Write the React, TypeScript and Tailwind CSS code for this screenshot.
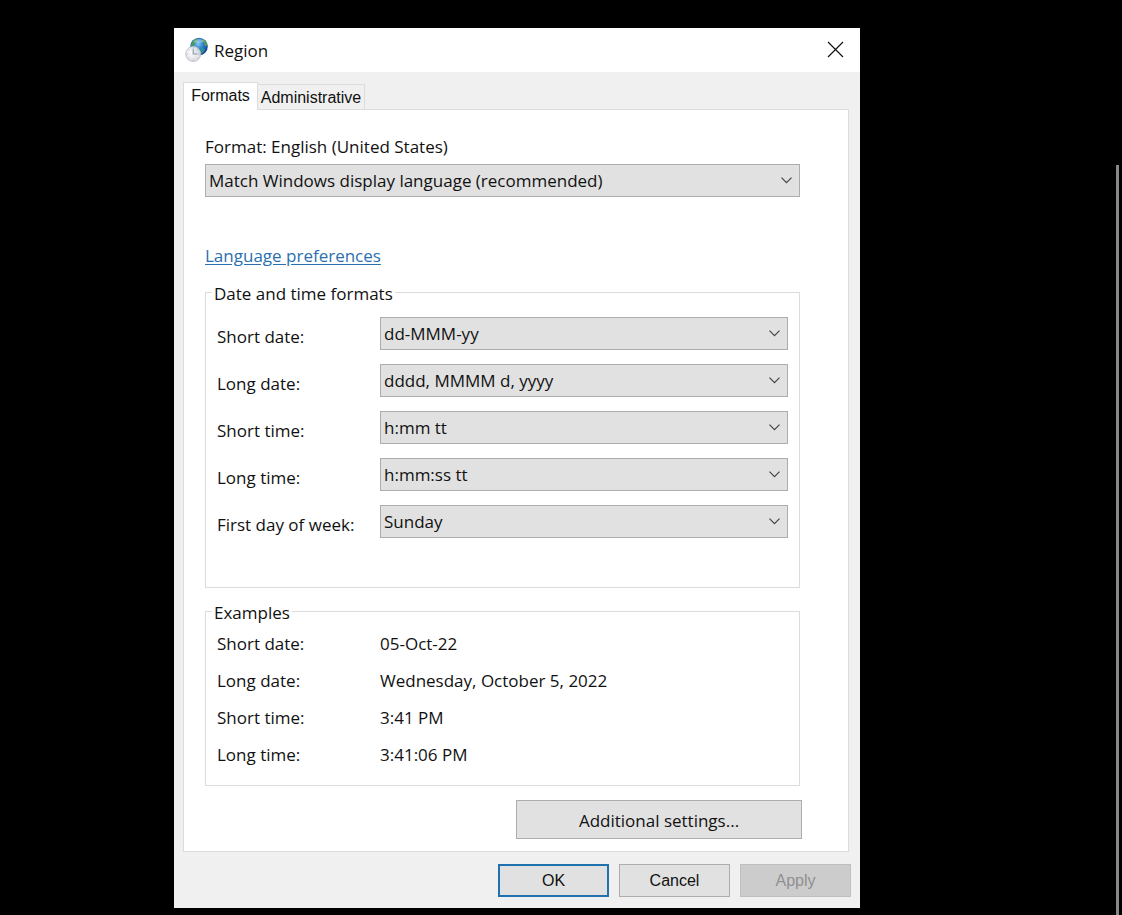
import { useState } from "react"

const dateTimeFormats = [
  { id: "short-date", label: "Short date:", options: ["dd-MMM-yy", "M/d/yyyy", "yyyy-MM-dd"] },
  { id: "long-date", label: "Long date:", options: ["dddd, MMMM d, yyyy", "MMMM d, yyyy"] },
  { id: "short-time", label: "Short time:", options: ["h:mm tt", "HH:mm"] },
  { id: "long-time", label: "Long time:", options: ["h:mm:ss tt", "HH:mm:ss"] },
  { id: "first-day", label: "First day of week:", options: ["Sunday", "Monday", "Saturday"] },
]

const examples = [
  { label: "Short date:", value: "05-Oct-22" },
  { label: "Long date:", value: "Wednesday, October 5, 2022" },
  { label: "Short time:", value: "3:41 PM" },
  { label: "Long time:", value: "3:41:06 PM" },
]

function RegionIcon() {
  return (
    <svg width="24" height="26" viewBox="0 0 24 26" aria-hidden="true">
      <defs>
        <radialGradient id="globe" cx="0.45" cy="0.35" r="0.65">
          <stop offset="0" stopColor="#7cc8f2" />
          <stop offset="0.5" stopColor="#2c78c8" />
          <stop offset="1" stopColor="#123a94" />
        </radialGradient>
        <radialGradient id="clock" cx="0.4" cy="0.4" r="0.65">
          <stop offset="0" stopColor="#ffffff" />
          <stop offset="1" stopColor="#d5d8de" />
        </radialGradient>
      </defs>
      <circle cx="14" cy="9.500" r="8.800" fill="url(#globe)" />
      <path d="M6.500 6c1.400-2.600 3.800-4.300 6.500-4.800l-.6 2.300-2 1.500-.6 2.400-2 1.800-2 .8z" fill="#4e9c4c" opacity="0.85" />
      <path d="M17.500 1.800c2.400 1 4.200 3 4.900 5.600l-1.400 2-1.600-1.200-.4-2.400-2-1.200z" fill="#57a850" opacity="0.85" />
      <path d="M15 10.500l3.400.2 1.600 1.800-1.400 2.800-2.400 1.800-.8-3z" fill="#2f9a88" opacity="0.8" />
      <path d="M8 4.500c3-2.800 8-3.200 11.500-.5-3 2.200-8 2.800-11.500.5z" fill="#ffffff" opacity="0.3" />
      <circle cx="8.200" cy="17" r="7.500" fill="url(#clock)" fillOpacity="0.94" stroke="#bcc0c6" strokeWidth="0.900" />
      <path d="M8.200 12.200V17h4" fill="none" stroke="#9096a0" strokeWidth="1.100" />
      <path
        d="M8.200 10.600v1M8.200 22.400v1M1.800 17h1M13.600 17h1M3.700 12.500l.7.700M12 20.800l.7.700M3.700 21.500l.7-.7M12 13.200l.7-.7"
        stroke="#a3a8b0"
        strokeWidth="0.800"
      />
    </svg>
  )
}

function Dropdown({ id, options }: { id: string; options: string[] }) {
  return (
    <div className="relative w-full">
      <select
        id={id}
        className="block h-[33px] w-full appearance-none border border-[#adadad] bg-[#e1e1e1] pl-[3px] pr-8 pt-px text-[17px] leading-6 text-[#111]"
      >
        {options.map((option) => (
          <option key={option}>{option}</option>
        ))}
      </select>
      <svg
        className="pointer-events-none absolute right-2 top-[13px]"
        width="11"
        height="7"
        viewBox="0 0 11 7"
        fill="none"
        stroke="#444"
        strokeWidth="1.2"
        aria-hidden="true"
      >
        <path d="M0.500 0.700l5 5 5-5" />
      </svg>
    </div>
  )
}

export default function App() {
  const [tab, setTab] = useState("formats")

  return (
    <div className="flex min-h-screen bg-black font-['Open_Sans','Noto_Sans',sans-serif] text-[17px] leading-6 text-[#111]">
      <main className="flex-1 pb-[7px] pl-[174px] pt-7">
        <section aria-label="Region" className="w-full max-w-[686px] bg-[#f0f0f0]">
          <header className="flex h-11 items-center bg-white pb-px pl-[11px] pr-4">
            <RegionIcon />
            <h1 className="ml-[5px] pt-[2px]">Region</h1>
            <button type="button" aria-label="Close" className="ml-auto">
              <svg width="17" height="17" viewBox="0 0 17 17" stroke="#111" strokeWidth="1.2" aria-hidden="true">
                <path d="M1 1l15 15M16 1L1 16" />
              </svg>
            </button>
          </header>

          <div className="pb-[11px] pl-[9px] pr-[11px] pt-[10px]">
            {/* Tabs */}
            <div role="tablist" className="relative -mb-px flex items-end font-['Liberation_Sans',Arial,sans-serif] text-base">
              <button
                type="button"
                role="tab"
                aria-selected={tab === "formats"}
                onClick={() => setTab("formats")}
                className="h-7 w-[75px] border border-b-0 border-[#dcdcdc] bg-white pb-[2px]"
              >
                Formats
              </button>
              <button
                type="button"
                role="tab"
                aria-selected={tab === "administrative"}
                onClick={() => setTab("administrative")}
                className="mb-px h-[25px] w-[107px] border border-b-0 border-l-0 border-[#dcdcdc] pt-px"
              >
                Administrative
              </button>
            </div>

            {/* Formats panel */}
            <div role="tabpanel" className="border border-[#dcdcdc] bg-white pb-3 pl-[21px] pr-12 pt-[25px]">
              <label htmlFor="format" className="mb-[5px] block">
                Format: English (United States)
              </label>
              <Dropdown id="format" options={["Match Windows display language (recommended)", "English (United States)"]} />

              <a href="#" className="mt-[47px] inline-block text-[#2a70b0] underline underline-offset-2">
                Language preferences
              </a>

              <fieldset className="mt-[10px] border border-[#dcdcdc] pb-[49px] pl-[11px] pr-[11px] pt-[11px]">
                <legend className="-ml-[5px] px-[2px] pt-1">Date and time formats</legend>
                <div className="grid gap-[14px]">
                  {dateTimeFormats.map((row) => (
                    <div key={row.id} className="flex items-center">
                      <label htmlFor={row.id} className="w-[163px] shrink-0 pt-[6px]">
                        {row.label}
                      </label>
                      <Dropdown id={row.id} options={row.options} />
                    </div>
                  ))}
                </div>
              </fieldset>

              <fieldset className="mt-[9px] border border-[#dcdcdc] pb-[18px] pl-[11px] pr-[11px] pt-[7px]">
                <legend className="-ml-[5px] px-[2px] pt-1">Examples</legend>
                <dl className="grid gap-[13px]">
                  {examples.map((row) => (
                    <div key={row.label} className="flex">
                      <dt className="w-[163px] shrink-0">{row.label}</dt>
                      <dd>{row.value}</dd>
                    </div>
                  ))}
                </dl>
              </fieldset>

              <div className="-mr-[2px] mt-[14px] flex justify-end">
                <button type="button" className="h-[39px] w-[286px] border border-[#adadad] bg-[#e1e1e1] pt-[2px]">
                  Additional settings...
                </button>
              </div>
            </div>

            {/* Dialog buttons */}
            <div className="-mr-[2px] mt-3 flex justify-end gap-[10px] font-['Liberation_Sans',Arial,sans-serif] text-base">
              <button type="button" className="h-[33px] w-[111px] border-2 border-[#1f72ae] bg-[#e1e1e1]">
                OK
              </button>
              <button type="button" className="h-[33px] w-[111px] border border-[#adadad] bg-[#e1e1e1]">
                Cancel
              </button>
              <button type="button" disabled className="h-[33px] w-[111px] border border-[#bfbfbf] bg-[#cccccc] text-[#909090]">
                Apply
              </button>
            </div>
          </div>
        </section>
      </main>

      {/* Scrollbar thumb */}
      <div className="flex w-[6px] shrink-0 pr-[3px] pt-[165px]">
        <div className="w-full bg-[#888888]" />
      </div>
    </div>
  )
}
